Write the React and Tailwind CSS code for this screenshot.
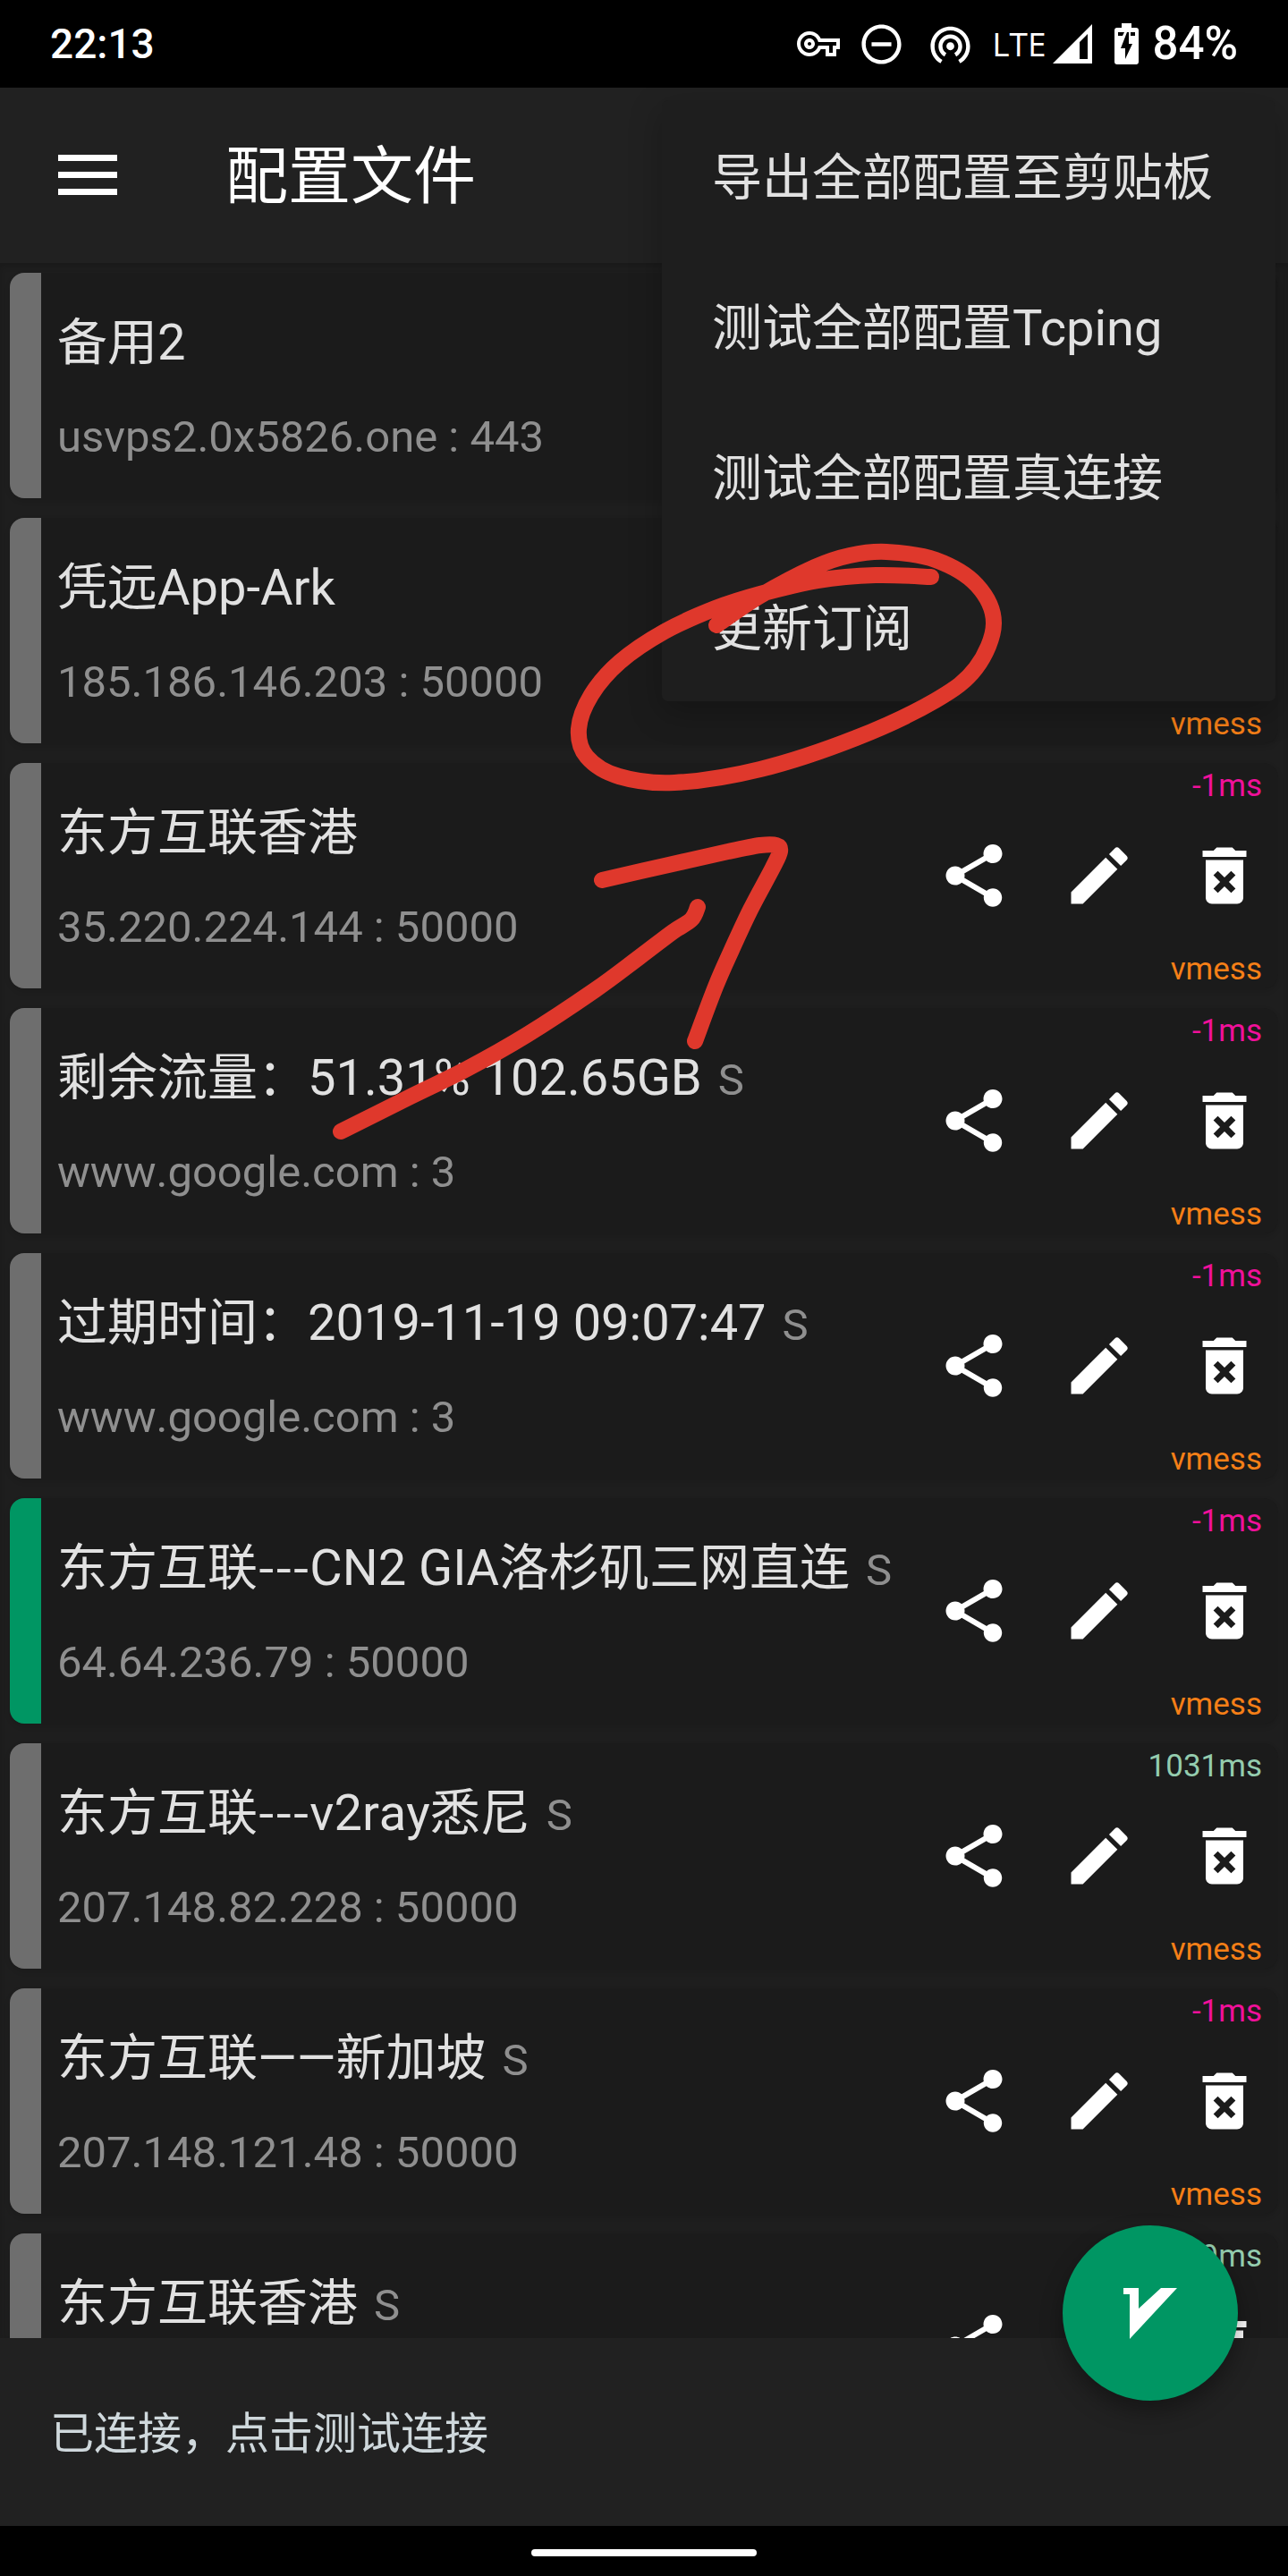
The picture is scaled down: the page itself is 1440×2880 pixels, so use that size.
import React from "react";
import {
  MdShare,
  MdEdit,
  MdDeleteForever,
  MdOutlineVpnKey,
  MdRemoveCircleOutline,
  MdWifiTethering,
} from "react-icons/md";

const servers = [
  { name: "备用2", address: "usvps2.0x5826.one : 443", latency: "-1ms" },
  { name: "凭远App-Ark", address: "185.186.146.203 : 50000", latency: "-1ms" },
  { name: "东方互联香港", address: "35.220.224.144 : 50000", latency: "-1ms" },
  { name: "剩余流量：51.31% 102.65GB", address: "www.google.com : 3", latency: "-1ms", sub: true },
  { name: "过期时间：2019-11-19 09:07:47", address: "www.google.com : 3", latency: "-1ms", sub: true },
  { name: "东方互联", dashes: "---", suffix: "CN2 GIA洛杉矶三网直连", address: "64.64.236.79 : 50000", latency: "-1ms", sub: true, active: true },
  { name: "东方互联", dashes: "---", suffix: "v2ray悉尼", address: "207.148.82.228 : 50000", latency: "1031ms", sub: true, ok: true },
  { name: "东方互联——新加坡", address: "207.148.121.48 : 50000", latency: "-1ms", sub: true },
  { name: "东方互联香港", latency: "269ms", sub: true, ok: true },
];

const menuItems = ["导出全部配置至剪贴板", "测试全部配置Tcping", "测试全部配置真连接", "更新订阅"];

const circlePoints = [
  [801, 699], [850, 666], [911, 634], [950, 621], [991, 617], [1046, 626], [1092, 654],
  [1111, 697], [1091, 747], [1046, 783], [957, 825], [850, 860], [754, 875], [692, 868],
  [656, 846], [647, 815], [661, 777], [693, 740], [743, 706], [800, 680], [850, 664],
  [914, 649], [979, 643], [1041, 645],
];
const headPoints = [
  [673, 984], [743, 968], [814, 952], [850, 945], [868, 945], [872, 952], [864, 970],
  [839, 1017], [818, 1062], [800, 1103], [777, 1164],
];
const shaftPoints = [
  [381, 1265], [455, 1228], [522, 1195], [589, 1157], [665, 1107], [715, 1070],
  [752, 1042], [773, 1028], [780, 1014],
];

/* Smooth curve through every point of a hand-drawn stroke. */
function strokePath(points) {
  let d = `M${points[0][0]} ${points[0][1]}`;
  for (let i = 0; i < points.length - 1; i++) {
    const p0 = points[i - 1] || points[i];
    const p1 = points[i];
    const p2 = points[i + 1];
    const p3 = points[i + 2] || p2;
    d += `C${p1[0] + (p2[0] - p0[0]) / 6} ${p1[1] + (p2[1] - p0[1]) / 6} ${p2[0] - (p3[0] - p1[0]) / 6} ${p2[1] - (p3[1] - p1[1]) / 6} ${p2[0]} ${p2[1]}`;
  }
  return d;
}

function StatusBar() {
  return (
    <div className="flex h-[98px] shrink-0 items-center justify-between bg-black px-14 text-white">
      <span className="text-[46px] leading-[56px] font-medium">22:13</span>
      <div className="flex items-center">
        <MdOutlineVpnKey className="mr-5 size-12" />
        <MdRemoveCircleOutline className="mr-6 size-[53px]" />
        <MdWifiTethering className="mr-5 size-[53px]" />
        <span className="mr-2 font-['Open_Sans'] text-[37px] leading-[48px]">LTE</span>
        <svg className="mr-[25px] size-11" viewBox="0 0 44 44" fill="currentColor" aria-hidden="true">
          <path fillRule="evenodd" d="M0 44L44 0V44ZM30 20L39 11V39H30Z" />
        </svg>
        <svg className="mr-[15px] h-[46px] w-[27px]" viewBox="0 0 27 46" aria-hidden="true">
          <path fill="#fff" d="M8 0H19V5H24Q27 5 27 8V43Q27 46 24 46H3Q0 46 0 43V8Q0 5 3 5H8Z" />
          <path fill="#000" d="M4 10H11L9 14H4ZM18 10H23V14H18Z" />
          <path fill="#000" d="M14 10H16V23H20L12 40V28H7Z" />
        </svg>
        <span className="text-[51px] leading-[56px] font-medium">84%</span>
      </div>
    </div>
  );
}

function AppBar() {
  return (
    <header className="flex h-[196px] shrink-0 items-center bg-[#212121] pl-[65px] text-white">
      <button type="button" aria-label="菜单" className="mr-[121px]">
        <svg className="h-[46px] w-[66px]" viewBox="0 0 66 46" fill="currentColor" aria-hidden="true">
          <path d="M0 0H66V7H0ZM0 19H66V26H0ZM0 38H66V45H0Z" />
        </svg>
      </button>
      <h1 className="pt-1 text-[70px] leading-[84px]">配置文件</h1>
    </header>
  );
}

function ServerCard({ server }) {
  return (
    <li className="flex h-[252px] shrink-0 overflow-hidden rounded-2xl bg-[#1b1b1b] pr-[18px] shadow-[0_3px_6px_rgba(0,0,0,0.12)]">
      <div className={server.active ? "w-[35px] shrink-0 bg-[#009663]" : "w-[35px] shrink-0 bg-[#6e6e6e]"} />
      <div className="min-w-0 flex-1 pt-[45px] pl-[18px] whitespace-nowrap [font-kerning:none]">
        <h2 className="text-[56px] leading-[66px] text-[#e1e1e1]">
          {server.name}
          {server.dashes && (
            <span className="font-['Noto_Sans_CJK_SC',sans-serif] leading-none">{server.dashes}</span>
          )}
          {server.suffix}
          {server.sub && <span className="ml-[18px] text-[49px] leading-none text-[#8f8f8f]">S</span>}
        </h2>
        {server.address && (
          <p className="mt-11 text-[49px] leading-[58px] text-[#8f8f8f]">{server.address}</p>
        )}
      </div>
      <div className="flex shrink-0 flex-col items-end justify-between pt-[5px] pb-px text-[35px] leading-[41px]">
        <span className={server.ok ? "text-[#94ccae]" : "text-[#f0109a]"}>{server.latency}</span>
        <div className="-mt-1 flex gap-14 text-white">
          <button type="button" aria-label="分享"><MdShare className="size-[84px]" /></button>
          <button type="button" aria-label="编辑"><MdEdit className="size-[84px]" /></button>
          <button type="button" aria-label="删除"><MdDeleteForever className="size-[84px]" /></button>
        </div>
        <span className="text-[#f57f17]">vmess</span>
      </div>
    </li>
  );
}

function OverflowMenu() {
  return (
    <div role="menu" className="absolute top-[112px] right-[14px] flex w-[686px] flex-col rounded-[7px] bg-[#1e1e1e] shadow-[0_12px_36px_rgba(0,0,0,0.25)]">
      {menuItems.map((item) => (
        <button
          key={item}
          type="button"
          role="menuitem"
          className="h-[168px] px-14 pt-1.5 text-left text-[56px] leading-[66px] whitespace-nowrap text-[#e1e1e1]"
        >
          {item}
        </button>
      ))}
    </div>
  );
}

function Markup() {
  return (
    <svg
      className="pointer-events-none absolute top-0 left-0 w-full"
      viewBox="0 0 1440 2880"
      fill="none"
      stroke="#df382c"
      strokeWidth="18"
      strokeLinecap="round"
      strokeLinejoin="round"
      aria-hidden="true"
    >
      <path d={strokePath(circlePoints)} />
      <path d={strokePath(headPoints)} />
      <path d={strokePath(shaftPoints)} />
    </svg>
  );
}

export default function App() {
  return (
    <div className="relative flex h-screen flex-col overflow-hidden bg-[#1e1e1e] font-[Roboto,'Noto_Sans_CJK_SC',sans-serif]">
      <StatusBar />
      <AppBar />
      <ul className="flex min-h-0 flex-1 flex-col gap-[22px] overflow-hidden px-[11px] pt-[11px] shadow-[inset_0_4px_6px_rgba(0,0,0,0.15)]">
        {servers.map((server, i) => (
          <ServerCard key={i} server={server} />
        ))}
      </ul>
      <footer className="relative flex h-[210px] shrink-0 items-center bg-[#212121] px-14 pt-1.5">
        <button type="button" className="text-[49px] leading-[58px] text-[#cfd8dc]">已连接，点击测试连接</button>
        <button
          type="button"
          aria-label="断开连接"
          className="absolute -top-[126px] right-14 flex size-[196px] items-center justify-center rounded-full bg-[#009663] shadow-[0_12px_24px_rgba(0,0,0,0.35)]"
        >
          <svg className="h-[57px] w-[60px]" viewBox="0 0 60 57" fill="#fff" aria-hidden="true">
            <path d="M0 0H17V23L42 0H60L7 57V7H0Z" />
          </svg>
        </button>
      </footer>
      <div className="flex h-14 shrink-0 items-center justify-center bg-black pt-1">
        <div className="h-2 w-[252px] rounded-full bg-white" />
      </div>
      <OverflowMenu />
      <Markup />
    </div>
  );
}
